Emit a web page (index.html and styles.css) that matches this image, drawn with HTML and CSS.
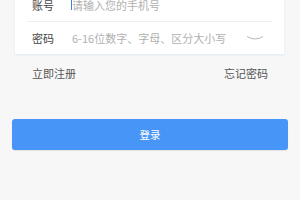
FILE: index.html
```html
<!DOCTYPE html>
<html lang="zh">
<head>
<meta charset="utf-8">
<link rel="stylesheet" href="styles.css">
</head>
<body>
<div class="card">
  <div class="row">
    <span class="label">账号</span>
    <span class="field"><span class="caret"></span>请输入您的手机号</span>
  </div>
  <div class="row last">
    <span class="label">密码</span>
    <span class="field">6-16位数字、字母、区分大小写</span>
    <svg class="eye" width="18" height="6" viewBox="0 0 18 6"><path d="M1 1.5 Q9 6.5 17 1.5" fill="none" stroke="#b8b8b8" stroke-width="1"/></svg>
  </div>
</div>
<div class="links">
  <span>立即注册</span>
  <span>忘记密码</span>
</div>
<div class="btn">登录</div>
</body>
</html>
```
FILE: styles.css
```css
html, body {
  margin: 0;
  padding: 0;
  background: #f7f7f7;
  font-family: "Noto Sans CJK SC", "Noto Sans", sans-serif;
}
body {
  width: 300px;
  height: 200px;
  overflow: hidden;
}
.card {
  margin: -11px 16px 0 15px;
  background: #ffffff;
  padding: 0 12px;
  box-shadow: 0 1px 2px rgba(150, 190, 230, 0.25);
}
.row {
  display: flex;
  align-items: center;
  height: 32px;
  border-bottom: 1px solid #eeeeee;
}
.row.last {
  border-bottom: none;
}
.label {
  width: 40px;
  padding-left: 5px;
  font-size: 11px;
  color: #444444;
  flex: none;
}
.field {
  position: relative;
  font-size: 11px;
  color: #b0b0b0;
  flex: 1;
  white-space: nowrap;
}
.caret {
  position: absolute;
  left: -1px;
  top: 1px;
  width: 1px;
  height: 12px;
  background: #3d7fe0;
}
.eye {
  flex: none;
  margin-right: 8px;
}
.links {
  display: flex;
  justify-content: space-between;
  padding: 12px 32px 0 32px;
  font-size: 11px;
  color: #555555;
  line-height: 15px;
}
.btn {
  margin: 38px 12px 0 12px;
  height: 31px;
  border-radius: 3px;
  background: #4895f8;
  color: #ffffff;
  font-size: 10.5px;
  display: flex;
  align-items: center;
  justify-content: center;
  box-shadow: 0 1px 1px rgba(0, 0, 0, 0.08);
}
```
